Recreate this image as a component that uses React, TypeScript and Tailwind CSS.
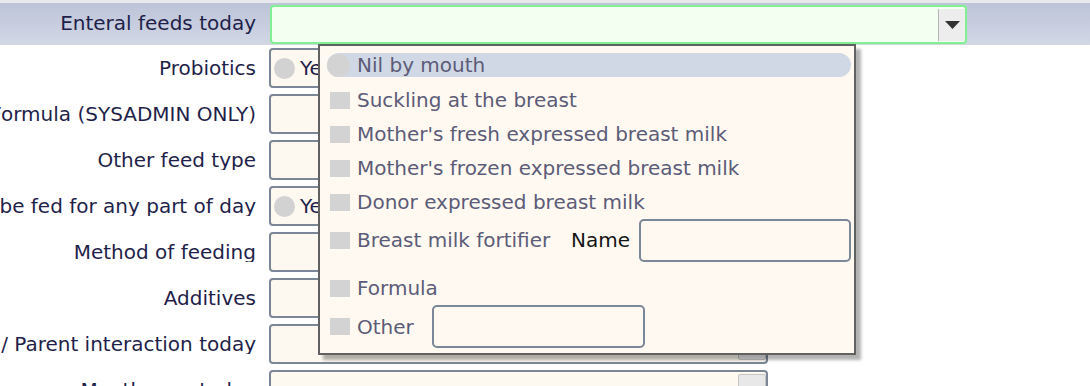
import React from 'react';

type Kind = 'radio' | 'text' | 'select';

const rows: { label: string; kind: Kind }[] = [
  { label: 'Probiotics', kind: 'radio' },
  { label: 'Formula (SYSADMIN ONLY)', kind: 'text' },
  { label: 'Other feed type', kind: 'text' },
  { label: 'Not to be fed for any part of day', kind: 'radio' },
  { label: 'Method of feeding', kind: 'select' },
  { label: 'Additives', kind: 'text' },
  { label: 'Baby / Parent interaction today', kind: 'select' },
  { label: 'Mouth care today', kind: 'select' },
];

const feedOptions = [
  "Suckling at the breast",
  "Mother's fresh expressed breast milk",
  "Mother's frozen expressed breast milk",
  "Donor expressed breast milk",
];

const Arrow = () => (
  <svg width="15" height="8" viewBox="0 0 15 8">
    <polygon points="0,0 15,0 7.5,8" fill="#333333" />
  </svg>
);

const Box = () => <span className="h-[17px] w-[20px] shrink-0 bg-[#d3d3d3]" />;

function Field({ kind }: { kind: Kind }) {
  return (
    <div className="flex h-[40px] w-[499px] shrink-0 items-center rounded-[4px] border-2 border-[#7b8697] bg-[#fdf8f0]">
      {kind === 'radio' && (
        <div className="ml-[3px] flex items-center gap-[5px] text-[#1f1f4a]">
          <span className="h-[21px] w-[21px] rounded-full bg-[#d2d2d2]" />
          <span>Yes</span>
        </div>
      )}
      {kind === 'select' && (
        <span className="ml-auto h-[32px] w-[28px] rounded-[2px] border border-[#c4c4c4] bg-[#e8e8e8]" />
      )}
    </div>
  );
}

function FeedMenu() {
  return (
    <div className="absolute left-[318px] top-[44px] flex h-[311px] w-[538px] flex-col border-2 border-[#616161] bg-[#fff9f1] pl-[7px] pr-[3px] pt-[7px] text-[#5c5c78] shadow-[5px_5px_3px_rgba(0,0,0,0.3)]">
      <div className="flex h-[24px] items-center gap-[7px] rounded-full bg-[#d0d8e5]">
        <span className="h-[23px] w-[23px] rounded-full bg-[#d3d3d3]" />
        <span>Nil by mouth</span>
      </div>
      <div className="mt-[6px] flex flex-col pl-[3px]">
        {feedOptions.map((o) => (
          <div key={o} className="flex h-[34px] items-center gap-[7px]">
            <Box />
            <span>{o}</span>
          </div>
        ))}
        <div className="flex h-[42px] items-center">
          <div className="flex w-[241px] items-center gap-[7px]">
            <Box />
            <span>Breast milk fortifier</span>
          </div>
          <span className="text-[#151515]">Name</span>
          <span className="ml-auto h-[43px] w-[212px] rounded-[5px] border-2 border-[#7b8697]" />
        </div>
        <div className="mt-[10px] flex h-[34px] items-center gap-[7px]">
          <Box />
          <span>Formula</span>
        </div>
        <div className="flex h-[43px] items-center">
          <div className="flex w-[102px] items-center gap-[7px]">
            <Box />
            <span>Other</span>
          </div>
          <span className="h-[43px] w-[213px] rounded-[5px] border-2 border-[#7b8697]" />
        </div>
      </div>
    </div>
  );
}

export default function App() {
  return (
    <div className="relative h-[386px] w-[1090px] overflow-hidden bg-white font-['DejaVu_Sans',sans-serif] text-[20px] leading-none">
      <div className="h-[3px] bg-[#e8e9ed]" />
      <div className="flex h-[42px] items-start bg-linear-to-b from-[#bdc4d8] to-[#d2d7e5] pt-[2px]">
        <div className="flex h-[35px] w-[256px] items-center justify-end whitespace-nowrap text-[#1f1f4a]">
          Enteral feeds today
        </div>
        <div className="ml-[14px] flex h-[39px] w-[697px] items-center justify-end rounded-[4px] border-2 border-[#82ef94] bg-[#f3fff1] shadow-[0_0_1px_#a8f3b6]">
          <span className="flex h-[32px] w-[27px] items-center justify-center border-l border-[#b4b4b4] bg-[#ededed]">
            <Arrow />
          </span>
        </div>
      </div>
      <div className="flex flex-col gap-[6px] pt-[3px]">
        {rows.map((r) => (
          <div key={r.label} className="flex items-center">
            <div className="flex w-[256px] shrink-0 justify-end overflow-hidden whitespace-nowrap text-[#1f1f4a]">
              {r.label}
            </div>
            <div className="ml-[13px]">
              <Field kind={r.kind} />
            </div>
          </div>
        ))}
      </div>
      <FeedMenu />
    </div>
  );
}
